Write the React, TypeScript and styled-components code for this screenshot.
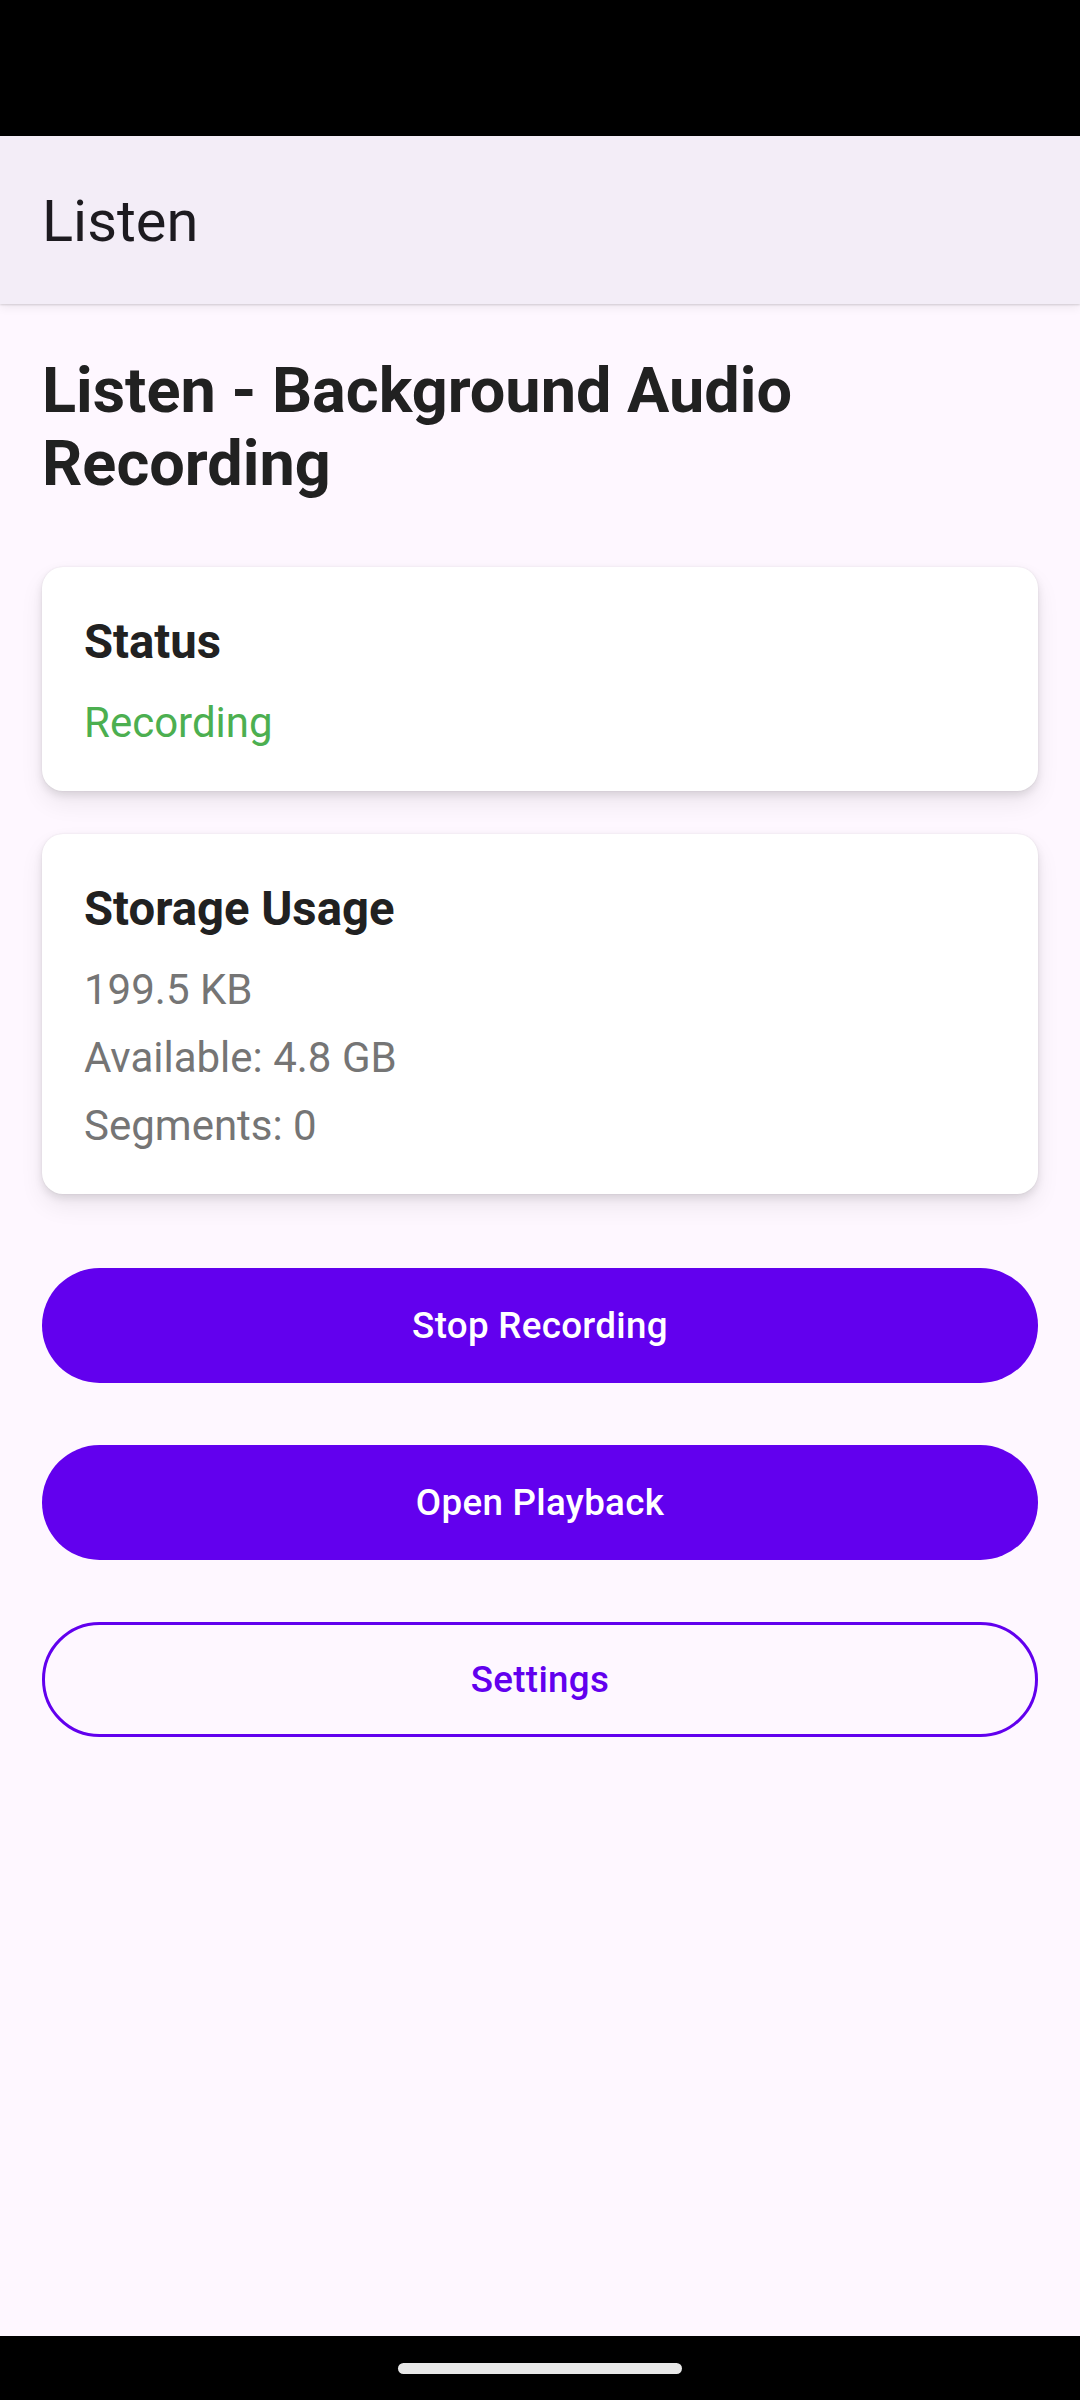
import React from "react";
import styled, { createGlobalStyle } from "styled-components";

const GlobalStyle = createGlobalStyle`
  html, body {
    margin: 0;
    padding: 0;
    background: #fef7ff;
  }
  body {
    font-family: Roboto, "Noto Sans", "Liberation Sans", sans-serif;
    -webkit-font-smoothing: antialiased;
  }
  * { box-sizing: border-box; }
`;

const Screen = styled.div`
  width: 1080px;
  min-height: 2400px;
  display: flex;
  flex-direction: column;
  background: #fef7ff;
`;

const StatusBar = styled.div`
  height: 136px;
  background: #000;
  flex-shrink: 0;
`;

const AppBar = styled.header`
  position: relative;
  z-index: 1;
  height: 168px;
  padding: 3px 42px 0;
  display: flex;
  align-items: center;
  background: #f3edf7;
  box-shadow: 0 1px 2px rgba(0, 0, 0, 0.14), 0 3px 10px rgba(0, 0, 0, 0.07);
  flex-shrink: 0;
`;

const AppTitle = styled.h1`
  margin: 0;
  font-size: 57.75px;
  line-height: 67px;
  font-weight: 400;
  color: #1d1b20;
`;

const Content = styled.main`
  flex: 1;
  padding: 50px 42px 0;
  display: flex;
  flex-direction: column;
`;

const Heading = styled.h2`
  margin: 0 0 67px;
  font-size: 63px;
  line-height: 73px;
  font-weight: 700;
  color: #212121;
`;

const Card = styled.section<{ $gap?: number }>`
  background: #ffffff;
  border-radius: 21px;
  padding: 43.5px 42px 37px;
  margin-bottom: ${(p) => p.$gap ?? 43}px;
  display: flex;
  flex-direction: column;
  box-shadow: 0 0 2px rgba(0, 0, 0, 0.08), 0 4px 8px rgba(0, 0, 0, 0.1),
    0 12px 24px rgba(0, 0, 0, 0.07);
`;

const CardTitle = styled.h3`
  margin: 0 0 17.5px;
  font-size: 47.25px;
  line-height: 63px;
  font-weight: 700;
  color: #212121;
`;

const CardText = styled.p<{ $color?: string }>`
  margin: 0;
  font-size: 42px;
  line-height: 63px;
  font-weight: 400;
  color: ${(p) => p.$color ?? "#757575"};
  & + & {
    margin-top: 5px;
  }
`;

const Buttons = styled.div`
  display: flex;
  flex-direction: column;
  gap: 62px;
`;

const Button = styled.button<{ $outlined?: boolean }>`
  height: 115px;
  width: 100%;
  border-radius: 58px;
  font-family: Roboto, "Noto Sans", "Liberation Sans", sans-serif;
  font-size: 36.75px;
  font-weight: 500;
  letter-spacing: 0.3px;
  display: flex;
  align-items: center;
  justify-content: center;
  cursor: pointer;
  background: ${(p) => (p.$outlined ? "transparent" : "#6200ee")};
  color: ${(p) => (p.$outlined ? "#6200ee" : "#ffffff")};
  border: ${(p) => (p.$outlined ? "3px solid #6200ee" : "none")};
  padding: 0;
`;

const NavBar = styled.div`
  height: 64px;
  background: #000;
  display: flex;
  justify-content: center;
  padding-top: 27px;
  flex-shrink: 0;
`;

const HomeIndicator = styled.div`
  width: 284px;
  height: 11px;
  border-radius: 6px;
  background: #e8e8e8;
`;

export default function App() {
  return (
    <>
      <GlobalStyle />
      <Screen>
        <StatusBar />
        <AppBar>
          <AppTitle>Listen</AppTitle>
        </AppBar>
        <Content>
          <Heading>Listen - Background Audio Recording</Heading>
          <Card>
            <CardTitle>Status</CardTitle>
            <CardText $color="#4caf50">Recording</CardText>
          </Card>
          <Card $gap={73.5}>
            <CardTitle>Storage Usage</CardTitle>
            <CardText>199.5 KB</CardText>
            <CardText>Available: 4.8 GB</CardText>
            <CardText>Segments: 0</CardText>
          </Card>
          <Buttons>
            <Button>Stop Recording</Button>
            <Button>Open Playback</Button>
            <Button $outlined>Settings</Button>
          </Buttons>
        </Content>
        <NavBar>
          <HomeIndicator />
        </NavBar>
      </Screen>
    </>
  );
}
